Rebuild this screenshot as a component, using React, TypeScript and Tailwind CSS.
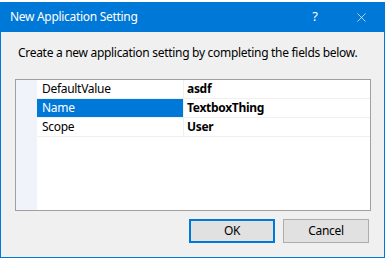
import { X } from 'lucide-react';

const rows = [
  { name: 'DefaultValue', value: 'asdf' },
  { name: 'Name', value: 'TextboxThing', selected: true },
  { name: 'Scope', value: 'User' },
];

export default function App() {
  return (
    <div className="w-[387px] h-[259px] bg-white relative overflow-hidden font-['Noto_Sans',sans-serif] text-[12px] tracking-[-0.3px]">
      {/* Dialog window */}
      <div className="absolute left-0 top-[2px] w-[385px] h-[256px] border border-[#0078d7] border-t-0 bg-[#f0f0f0] flex flex-col">
        {/* Title bar */}
        <div className="h-[30px] bg-[#0078d7] text-white flex items-center pl-[9px]">
          <span className="flex-1">New Application Setting</span>
          <span className="w-[46px] text-center text-[13px]">?</span>
          <span className="w-[46px] flex justify-center">
            <X className="w-[15px] h-[15px]" strokeWidth={1.1} />
          </span>
        </div>

        <p className="mt-[13px] ml-[17px] text-black leading-[16px]">
          Create a new application setting by completing the fields below.
        </p>

        {/* Property grid */}
        <div className="mt-[18px] ml-[14px] w-[356px] h-[132px] border border-[#a0a0a0] bg-white flex">
          <div className="w-[21px] bg-[#f0f4fa]" />
          <div className="flex-1 flex flex-col">
            {rows.map((r) => (
              <div key={r.name} className="flex h-[19px] border-b border-[#f0f0f0]">
                <div
                  className={`w-[147px] border-r border-[#f0f0f0] pl-[5px] flex items-center ${
                    r.selected ? 'bg-[#0078d7] text-white' : 'text-black'
                  }`}
                >
                  {r.name}
                </div>
                <div className="flex-1 pl-[3px] flex items-center font-bold text-black">{r.value}</div>
              </div>
            ))}
          </div>
        </div>

        {/* Buttons */}
        <div className="mt-[8px] flex justify-end gap-[8px] pr-[15px]">
          <button className="w-[86px] h-[24px] bg-[#e1e1e1] border-2 border-[#0078d7] text-black">OK</button>
          <button className="w-[86px] h-[24px] bg-[#e1e1e1] border border-[#adadad] text-black">Cancel</button>
        </div>
      </div>
    </div>
  );
}
